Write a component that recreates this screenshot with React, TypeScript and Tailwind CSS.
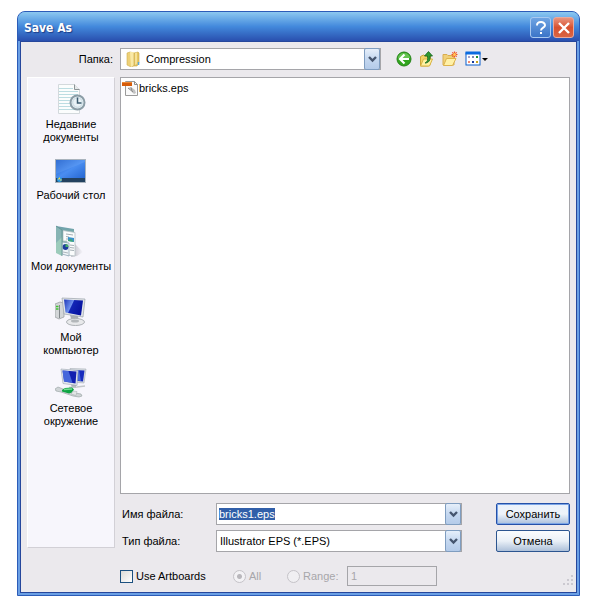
import React, { useEffect, useRef } from 'react';

const RecentIcon = () => (
  <svg width="32" height="32" viewBox="0 0 32 32">
    <path d="M3.5 1.5h16l5 5v24h-21z" fill="#fbfdfd" stroke="#d3d9dc" />
    <path d="M19.500 1.500v5h5" fill="#e6e9ea" stroke="#8d9497" />
    <path d="M4 5.500h14M4 8.500h19M4 11.500h19M4 14.500h19M4 17.500h19M4 20.500h19M4 23.500h19M4 26.500h19" stroke="#bcdde2" />
    <circle cx="22.500" cy="19.500" r="7" fill="#e9f2f6" stroke="#8b9da6" strokeWidth="2" />
    <circle cx="22.500" cy="19.500" r="4.800" fill="none" stroke="#c4d7df" />
    <path d="M22.500 14.500v5.500h4" fill="none" stroke="#3c5d70" strokeWidth="1.500" />
  </svg>
);

const DesktopIcon = () => (
  <svg width="32" height="32" viewBox="0 0 32 32">
    <defs>
      <linearGradient id="desk" x1="0" y1="0" x2="1" y2="1">
        <stop offset="0" stopColor="#1d5cc8" />
        <stop offset=".5" stopColor="#4a8df0" />
        <stop offset="1" stopColor="#2364d0" />
      </linearGradient>
    </defs>
    <rect x="0" y="5" width="31" height="24" fill="#a9b3bd" />
    <rect x="1" y="6" width="29" height="19" fill="url(#desk)" />
    <path d="M1 6h29v2L1 20z" fill="#8dbcff" opacity=".2" />
    <rect x="1" y="24" width="29" height="4" fill="#23415f" />
    <circle cx="4.500" cy="25.500" r="2.500" fill="#2d9be0" />
    <path d="M3 25h1.500v-1.500M5 26h1.500" stroke="#f6d84c" fill="none" />
  </svg>
);

const DocumentsIcon = () => (
  <svg width="32" height="32" viewBox="0 0 32 32">
    <defs>
      <linearGradient id="cover" x1="0" y1="0" x2="0" y2="1">
        <stop offset="0" stopColor="#6f9fae" />
        <stop offset=".5" stopColor="#7fb7a2" />
        <stop offset="1" stopColor="#a6cfe0" />
      </linearGradient>
      <linearGradient id="shade" x1="0" y1="0" x2="1" y2="0">
        <stop offset="0" stopColor="#b9b9c0" />
        <stop offset="1" stopColor="#f7f6fc" />
      </linearGradient>
    </defs>
    <path d="M20 19l8 8-6 4-6 1z" fill="url(#shade)" />
    <path d="M1 1l18 3v22L1 28z" fill="url(#cover)" />
    <path d="M8 5.500l12 2V31l-8-1V16H8z" fill="#fafcfc" stroke="#b4bfc4" strokeWidth=".8" />
    <path d="M11 9l7 1M11 11.500l3 .500M11 14h3M15 20l4 .500M15 22.500l4 .500M15 25l4 .500" stroke="#a5afb5" />
    <path d="M13 12l6 1v4l-6-1z" fill="#3a91c9" />
    <path d="M13 15l3-1 3 3-6-1z" fill="#42a873" />
    <path d="M7 17l7 1v13l-7-2z" fill="#eef4f8" stroke="#8da6b5" strokeWidth=".8" />
    <circle cx="10.500" cy="22" r="2.900" fill="#1d3d9c" />
    <path d="M10.500 22v-3a3 3 0 0 1 3 3z" fill="#46ad68" />
    <path d="M8 27l5 1" stroke="#aeb7be" />
    <path d="M1 1l6 4v26l-6-3z" fill="#9ccbbb" />
    <path d="M1 1l6 4v7L1 18z" fill="#7fa9b0" opacity=".7" />
    <path d="M1 1l6 4v26" fill="none" stroke="#5f8f92" strokeWidth=".8" />
  </svg>
);

const ComputerIcon = () => (
  <svg width="32" height="32" viewBox="0 0 32 32">
    <defs>
      <linearGradient id="screen" x1="0" y1="0" x2="1" y2=".4">
        <stop offset="0" stopColor="#1c35b8" />
        <stop offset=".45" stopColor="#6f92ee" />
        <stop offset=".5" stopColor="#1226b6" />
        <stop offset="1" stopColor="#0713a0" />
      </linearGradient>
    </defs>
    <path d="M0 8l5-2 4 1v14l-5 2-4-2z" fill="#d3d6d8" stroke="#93989b" strokeWidth=".7" />
    <path d="M4.500 9v13" stroke="#82888b" />
    <path d="M1 10.500h2.500M1 13h2.500" stroke="#3fc42e" strokeWidth="1.500" />
    <path d="M15 19l8 1 1 6h-7z" fill="#a9aeb2" />
    <ellipse cx="20.500" cy="26" rx="9" ry="3.500" fill="#e8e9eb" stroke="#adb1b5" />
    <ellipse cx="20" cy="25" rx="4" ry="1.500" fill="#b3b7ba" />
    <path d="M7 2l23 1-2 18-19-3z" fill="#e2e5e8" stroke="#9ba3aa" strokeWidth=".7" />
    <path d="M9 3.500l19 1-2 15-15.500-3z" fill="url(#screen)" />
  </svg>
);

const NetworkIcon = () => (
  <svg width="32" height="32" viewBox="0 0 32 32">
    <path d="M15 1.500l16 .500-2 14-12-1z" fill="#d6dbe1" stroke="#a4acb4" strokeWidth=".6" />
    <path d="M17 3l12.500.500-1.500 11-10-1z" fill="#172bbd" />
    <path d="M20 3h4l2 11-4-.500z" fill="#5a7fe9" opacity=".7" />
    <path d="M6 2l17 1.500-1 15-14-2z" fill="#e4e8ec" stroke="#9ba5b0" strokeWidth=".6" />
    <path d="M7.500 3.500l14 1-1 12-11.500-2z" fill="#1220b0" />
    <path d="M7.500 3.500l6 .500 4 11.800-8.500-1.300z" fill="#577de9" opacity=".75" />
    <path d="M16 17.500l5 .500v3h-4z" fill="#abb2b8" />
    <path d="M14 20.500l8-.500 8-1" fill="none" stroke="#c3c7ca" strokeWidth="1.300" />
    <path d="M0 22l3-2 5 2 12 4 6 1 1 2-3 1-6-1-12-4-5-1z" fill="#cfd4d6" stroke="#929d9e" strokeWidth=".6" />
    <path d="M7 23l3-2 7-.500 2 2-2 3-3 1-7-2z" fill="#0fa544" />
    <path d="M9 22.500l8-.500" stroke="#75db91" strokeWidth="1.300" />
    <path d="M18 24l4 .500-1 4-5-1.500z" fill="#e2e6e6" stroke="#a1a9aa" strokeWidth=".5" />
  </svg>
);

const FolderIcon = () => (
  <svg width="16" height="16" viewBox="0 0 16 16" className="shrink-0">
    <path d="M1 2l3-1 4 1v13l-3 1-4-2z" fill="#eed177" stroke="#cfae50" strokeWidth=".6" />
    <path d="M4 1h4v13l-3 2z" fill="#f9e9a6" />
    <path d="M8 2l4-1 1 1v10l-2 3H8z" fill="#e6c762" stroke="#c8a647" strokeWidth=".6" />
    <path d="M9 2l2-.500v11L9 14z" fill="#f6e197" />
    <path d="M12.500 11v3" stroke="#59a9dc" strokeWidth="1.500" />
  </svg>
);

const EpsIcon = () => (
  <svg width="17" height="17" viewBox="0 0 17 17">
    <path d="M3.500 1.500h9l3 3v11h-12z" fill="#fafafa" stroke="#9a9a9a" />
    <path d="M12.500 1.500v3h3" fill="none" stroke="#8b8b8b" />
    <path d="M6 8l3-1 4 3 1 3-2 1-2-2-1-2z" fill="#c2c2c2" />
    <path d="M6 8l5 4M9 7.500l1 3" stroke="#888" />
    <rect x="0" y="2" width="10" height="4" fill="#d65c0a" />
    <path d="M0 2.500h10" stroke="#ed8a37" />
  </svg>
);

const BackIcon = () => (
  <svg width="16" height="16" viewBox="0 0 16 16">
    <circle cx="8" cy="8" r="7" fill="#31a51e" stroke="#258318" />
    <path d="M2 7a6 5 0 0 1 12 0z" fill="#83d36d" opacity=".65" />
    <path d="M8.500 3.500L4 8l4.500 4.500M4.500 8H13" fill="none" stroke="#fff" strokeWidth="2.200" />
  </svg>
);

const UpIcon = () => (
  <svg width="16" height="16" viewBox="0 0 16 16">
    <path d="M1.500 5.500l3-1.500 2 1h5v8l-2 2h-8z" fill="#f3d368" stroke="#cda53a" />
    <path d="M1.500 15l3-7h9l-3 7z" fill="#fff1a2" stroke="#d9b445" />
    <path d="M6 12c2.500-1 3-3 2.500-7H5.500L9.500.5l4 4.500h-2.500c.5 4-1 7-5 7z" fill="#2f9a2f" stroke="#14651f" strokeWidth=".8" />
  </svg>
);

const NewFolderIcon = () => (
  <svg width="16" height="16" viewBox="0 0 16 16">
    <path d="M1 3.500h4l1 1h6V14H1z" fill="#f0d078" stroke="#d8ad50" />
    <path d="M1.500 14.500l3-7h9.500l-3.500 7z" fill="#fff1a8" stroke="#ddb34c" />
    <path d="M12.500.5v6M9.500 3.500h6M10.300 1.300l4.400 4.400M14.700 1.300l-4.400 4.400" stroke="#f0552a" strokeWidth="1.200" />
    <circle cx="12.500" cy="3.500" r="1.500" fill="#ffc85a" />
  </svg>
);

const ViewIcon = () => (
  <svg width="24" height="16" viewBox="0 0 24 16">
    <rect x="1" y="2" width="14" height="12" fill="#fff" stroke="#0a5fcd" />
    <path d="M.5 2h15" stroke="#0a6be0" strokeWidth="3" />
    <path d="M3 5h2v2H3z" fill="#a8a0c8" />
    <path d="M7 5h2v2H7z" fill="#7c87b5" />
    <path d="M11 5h2v2h-2z" fill="#209030" />
    <path d="M3 10h2v2H3z" fill="#f08a70" />
    <path d="M7 10h2v2H7z" fill="#173a9c" />
    <path d="M11 10h2v2h-2z" fill="#c9a31c" />
    <path d="M17 7h6l-3 3z" fill="#000" />
  </svg>
);

const Arrow = () => (
  <svg width="9" height="7" viewBox="0 0 9 7">
    <path d="M1 1l3.500 3.500L8 1" fill="none" stroke="#46566f" strokeWidth="2.400" />
  </svg>
);

const arrowBox =
  'absolute right-px top-0 flex h-full w-4 items-center justify-center rounded-xs border border-[#7f9dc0] bg-linear-to-b from-[#e6effa] via-[#c5d8f0] to-[#b4cbe9]';

const places = [
  { label: ['Недавние', 'документы'], icon: <RecentIcon /> },
  { label: ['Рабочий стол'], icon: <DesktopIcon /> },
  { label: ['Мои документы'], icon: <DocumentsIcon /> },
  { label: ['Мой', 'компьютер'], icon: <ComputerIcon /> },
  { label: ['Сетевое', 'окружение'], icon: <NetworkIcon /> },
];

const tools = [
  { name: 'Back', icon: <BackIcon /> },
  { name: 'Up One Level', icon: <UpIcon /> },
  { name: 'New Folder', icon: <NewFolderIcon /> },
  { name: 'View', icon: <ViewIcon /> },
];

const App: React.FC = () => {
  const nameRef = useRef<HTMLInputElement>(null);

  // The suggested name is selected as soon as the dialog opens
  useEffect(() => {
    nameRef.current?.focus();
    nameRef.current?.select();
  }, []);

  return (
    <div className="flex min-h-screen flex-col bg-white pt-[11px] pr-5 pb-1 pl-[17px] font-['Liberation_Sans',sans-serif] text-[11px] leading-[13px] text-black">
      <div role="dialog" aria-labelledby="title" className="flex flex-1 flex-col rounded-t-lg border border-[#2c5cb8] bg-[#6a9fe4]">
        <header className="flex h-[29px] items-center justify-between rounded-t-[7px] bg-linear-to-b from-[#8cc8f0] via-[#4389dc] to-[#2a4fae] pr-[5px] pl-1.5">
          <h1 id="title" className="pt-1 font-['DejaVu_Sans_Condensed','DejaVu_Sans',sans-serif] text-[12px] font-bold text-white [text-shadow:1px_1px_1px_#1d3c86]">Save As</h1>
          <div className="flex gap-0.5 pt-0.5">
            <button aria-label="Help" className="flex size-[21px] items-center justify-center rounded-[3px] border border-[#a9c9f0] bg-linear-to-b from-[#6fa4e2] to-[#3b74c8]">
              <svg width="12" height="14" viewBox="0 0 12 14">
                <path d="M2 4.500C2 0 10 0 10 4.300C10 6.700 6 6.500 6 9.500" fill="none" stroke="#fff" strokeWidth="2" />
                <path d="M5 11h2v2H5z" fill="#fff" />
              </svg>
            </button>
            <button aria-label="Close" className="flex size-[21px] items-center justify-center rounded-[3px] border border-[#e9a99c] bg-linear-to-b from-[#e8937d] via-[#d8512f] to-[#d96443]">
              <svg width="12" height="12" viewBox="0 0 12 12">
                <path d="M1 1l10 10M11 1L1 11" stroke="#fff" strokeWidth="2.400" />
              </svg>
            </button>
          </div>
        </header>

        <div className="mx-[2px] mb-[2px] flex flex-1 flex-col border border-[#26479c] bg-[#ebe9ed] pt-1.5 pr-1.5 pl-1.5">
          <div className="flex h-[22px] items-center">
            <label htmlFor="folder" className="mr-[7px] w-[86px] text-right">Папка:</label>
            <div className="relative flex h-full w-[261px] items-center">
              <select id="folder" className="h-full w-full appearance-none border border-[#a5a5a9] bg-white pl-[25px]">
                <option>Compression</option>
              </select>
              <span className="pointer-events-none absolute left-1.5"><FolderIcon /></span>
              <span className={`pointer-events-none ${arrowBox}`}><Arrow /></span>
            </div>
            <div className="ml-[15px] flex gap-[7px]">
              {tools.map(tool => (
                <button key={tool.name} aria-label={tool.name}>{tool.icon}</button>
              ))}
            </div>
          </div>

          <div className="mt-[7px] flex flex-1 gap-[5px]">
            <nav className="mb-[44px] flex w-[88px] shrink-0 flex-col self-stretch border border-white border-r-[#d2d0d6] border-b-[#d2d0d6] bg-[#f7f6fc] pt-[5px]">
              {places.map(place => (
                <button key={place.label[0]} className="flex h-[71px] flex-col items-center gap-[3px] whitespace-nowrap">
                  {place.icon}
                  <span>
                    {place.label.map(line => (
                      <span key={line} className="block">{line}</span>
                    ))}
                  </span>
                </button>
              ))}
            </nav>

            <div className="flex min-w-0 flex-1 flex-col">
              <ul className="flex-1 border border-[#a5a5a9] bg-white pt-0.5 pl-px">
                <li className="flex items-center">
                  <EpsIcon />
                  <span>bricks.eps</span>
                </li>
              </ul>

              <div className="mt-[9px] flex justify-between">
                <div className="grid grid-cols-[96px_246px] items-center gap-y-[5px]">
                  <label htmlFor="name" className="pl-0.5">Имя файла:</label>
                  <div className="relative h-[22px]">
                    <input
                      id="name"
                      ref={nameRef}
                      defaultValue="bricks1.eps"
                      className="h-full w-full border border-[#a5a5a9] bg-white pl-0.5 outline-none selection:bg-[#315fa9] selection:text-white"
                    />
                    <button aria-label="Recent names" className={arrowBox}><Arrow /></button>
                  </div>
                  <label htmlFor="type" className="pl-0.5">Тип файла:</label>
                  <div className="relative h-[22px]">
                    <select id="type" className="h-full w-full appearance-none border border-[#a5a5a9] bg-white pl-[3px]">
                      <option>Illustrator EPS (*.EPS)</option>
                    </select>
                    <span className={`pointer-events-none ${arrowBox}`}><Arrow /></span>
                  </div>
                </div>
                <div className="flex w-[74px] flex-col gap-[5px]">
                  <button className="h-[22px] rounded-xs border border-[#2450a8] bg-linear-to-b from-[#e9f1fb] via-[#eef3f9] to-[#a9bfdc] inset-ring inset-ring-[#7ba5e6]">Сохранить</button>
                  <button className="h-[22px] rounded-xs border border-[#2c5590] bg-linear-to-b from-[#fafcfe] via-[#eaf0f7] to-[#adc0d9]">Отмена</button>
                </div>
              </div>

              <div className="mt-[14px] mb-1.5 flex h-5 items-center">
                <input id="artboards" type="checkbox" className="size-[13px] appearance-none border border-[#1c5180] bg-linear-to-br from-[#dcdcd7] to-white" />
                <label htmlFor="artboards" className="ml-[3px] w-[97px]">Use Artboards</label>
                <input id="all" type="radio" name="range" defaultChecked disabled className="size-[13px] appearance-none rounded-full border border-[#c5c3c8] bg-[radial-gradient(circle,#b9b7bc_0_2px,#f3f2f5_3px)]" />
                <label htmlFor="all" className="ml-[3px] w-[38px] text-[#a7a6aa]">All</label>
                <input id="range" type="radio" name="range" disabled className="size-[13px] appearance-none rounded-full border border-[#c5c3c8] bg-[#f0eff2]" />
                <label htmlFor="range" className="ml-[3px] w-[44px] text-[#a7a6aa]">Range:</label>
                <input aria-label="Range value" defaultValue="1" disabled className="h-5 w-[90px] border border-[#a5a5a9] bg-[#ebe9ed] pl-[3px] text-[#a7a6aa]" />
                <svg width="12" height="12" viewBox="0 0 12 12" className="-mr-1 ml-auto self-end">
                  <path d="M9 1h2v2H9zM5 5h2v2H5zM9 5h2v2H9zM1 9h2v2H1zM5 9h2v2H5zM9 9h2v2H9z" fill="#cbc9d0" />
                </svg>
              </div>
            </div>
          </div>
        </div>
      </div>
    </div>
  );
};

export default App;
